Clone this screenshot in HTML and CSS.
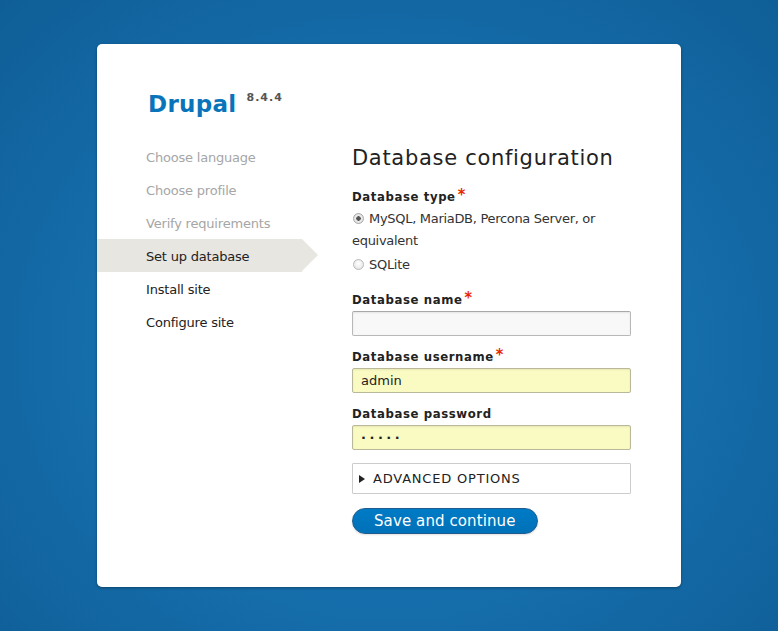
FILE: index.html
```html
<!DOCTYPE html>
<html lang="en">
<head>
<meta charset="utf-8">
<title>Drupal 8.4.4 – Set up database</title>
<link rel="stylesheet" href="styles.css">
</head>
<body>
<div class="page">
  <div class="card">
    <header class="brand">
      <span class="brand-name">Drupal</span><span class="brand-version">8.4.4</span>
    </header>
    <div class="layout">
      <ol class="steps">
        <li class="step done">Choose language</li>
        <li class="step done">Choose profile</li>
        <li class="step done">Verify requirements</li>
        <li class="step active">Set up database</li>
        <li class="step">Install site</li>
        <li class="step">Configure site</li>
      </ol>
      <main class="main">
        <h1 class="title">Database configuration</h1>
        <form class="form">
          <div class="field field-radios">
            <div class="label">Database type<span class="req">*</span></div>
            <label class="radio"><input type="radio" name="db" checked><span>MySQL, MariaDB, Percona Server, or equivalent</span></label>
            <label class="radio radio-2"><input type="radio" name="db"><span>SQLite</span></label>
          </div>
          <div class="field">
            <label class="label" for="dbname">Database name<span class="req">*</span></label>
            <input class="text" id="dbname" type="text">
          </div>
          <div class="field">
            <label class="label" for="dbuser">Database username<span class="req">*</span></label>
            <input class="text filled" id="dbuser" type="text" value="admin">
          </div>
          <div class="field">
            <label class="label" for="dbpass">Database password</label>
            <input class="text filled dots" id="dbpass" type="text" value="·····">
          </div>
          <details class="advanced">
            <summary><span class="tri"></span>ADVANCED OPTIONS</summary>
          </details>
          <button type="button" class="btn">Save and continue</button>
        </form>
      </main>
    </div>
  </div>
</div>
</body>
</html>
```
FILE: styles.css
```css
html, body {
  margin: 0;
  padding: 0;
  height: 100%;
}
body {
  background: radial-gradient(ellipse at 50% 55%, #1b7bbd 0%, #1670ae 45%, #0f5e97 100%);
  font-family: "DejaVu Sans", Verdana, sans-serif;
  font-size: 13px;
  color: #222;
}
.page {
  padding-top: 44px;
}
.card {
  width: 584px;
  box-sizing: border-box;
  margin: 0 auto;
  background: #fff;
  border-radius: 5px;
  box-shadow: 0 1px 3px rgba(0, 0, 0, 0.35);
  padding: 45px 0 53px 0;
  height: 543px;
}
.brand {
  padding-left: 51px;
  height: 30px;
  line-height: 30px;
}
.brand-name {
  font-size: 23px;
  font-weight: bold;
  color: #0a74bb;
  letter-spacing: 0.3px;
}
.brand-version {
  font-size: 11px;
  font-weight: bold;
  color: #555;
  letter-spacing: 1px;
  margin-left: 10px;
  vertical-align: top;
  position: relative;
  top: -6px;
}
.layout {
  display: flex;
  gap: 50px;
  margin-top: 22px;
}
.steps {
  list-style: none;
  margin: 0;
  padding: 0;
  width: 205px;
  flex: none;
}
.step {
  height: 33px;
  line-height: 33px;
  padding-left: 49px;
  color: #222;
  position: relative;
  letter-spacing: -0.2px;
}
.step.done {
  color: #a6a6a6;
}
.step.active {
  background: #e8e6e1;
  margin-top: -1px;
  margin-bottom: 1px;
  line-height: 35px;
}
.step.active::after {
  content: "";
  position: absolute;
  right: -16px;
  top: 0;
  border-left: 16px solid #e8e6e1;
  border-top: 16.5px solid transparent;
  border-bottom: 16.5px solid transparent;
}
.main {
  width: 279px;
  flex: none;
}
.title {
  margin: 0 0 16px 0;
  padding-top: 5px;
  font-size: 21px;
  line-height: 24px;
  font-weight: normal;
  color: #222;
  letter-spacing: 0.7px;
}
.form {
  margin: 0;
}
.field {
  margin-top: 10px;
}
.field-radios {
  margin-top: 0;
  padding-bottom: 3px;
}
.label {
  display: block;
  font-family: "DejaVu Sans Condensed", "DejaVu Sans", sans-serif;
  font-weight: bold;
  line-height: 22px;
  color: #222;
  letter-spacing: 0.6px;
}
.req {
  color: #e62600;
  font-size: 16px;
  margin-left: 2px;
  vertical-align: top;
  position: relative;
  top: -2px;
}
.radio {
  display: block;
  line-height: 22px;
  color: #333;
  letter-spacing: -0.3px;
}
.radio-2 {
  margin-top: 2px;
}
.radio input {
  appearance: none;
  -webkit-appearance: none;
  width: 11px;
  height: 11px;
  margin: 0 5px 0 1px;
  border: 1px solid #b8b8b8;
  border-radius: 50%;
  background: radial-gradient(circle at 50% 40%, #ffffff 0%, #e0e0e0 100%);
  vertical-align: -1px;
  box-sizing: border-box;
}
.radio input:checked {
  background: radial-gradient(circle, #555 0, #555 2px, #ececec 2.5px, #d8d8d8 100%);
  border-color: #a8a8a8;
}
.text {
  display: block;
  box-sizing: border-box;
  width: 279px;
  height: 25px;
  margin: 0;
  padding: 0 8px;
  border: 1px solid #b8b8b8;
  border-top-color: #a8a8a8;
  border-radius: 2px;
  background: #f8f8f8;
  font-family: "DejaVu Sans", Verdana, sans-serif;
  font-size: 13px;
  color: #222;
  box-shadow: inset 0 1px 2px rgba(0, 0, 0, 0.08);
}
.text.filled {
  background: #fafac3;
  border-color: #b9b99a;
}
.text.dots {
  letter-spacing: 3.5px;
  font-weight: bold;
}
.advanced {
  margin-top: 13px;
  border: 1px solid #cccccc;
  border-radius: 1px;
  background: #fff;
}
.advanced summary {
  list-style: none;
  height: 29px;
  line-height: 29px;
  padding-left: 6px;
  font-size: 13px;
  color: #222;
  letter-spacing: 0.8px;
  cursor: pointer;
}
.advanced summary::-webkit-details-marker {
  display: none;
}
.tri {
  display: inline-block;
  width: 0;
  height: 0;
  border-left: 6px solid #222;
  border-top: 4px solid transparent;
  border-bottom: 4px solid transparent;
  margin-right: 8px;
  vertical-align: 0px;
}
.btn {
  display: block;
  margin-top: 14px;
  height: 26px;
  padding: 0 21px;
  white-space: nowrap;
  border: 1px solid #1e5c90;
  border-radius: 13px;
  background: linear-gradient(to bottom, #007bc6 0%, #0071b8 100%);
  color: #fff;
  font-family: "DejaVu Sans", Verdana, sans-serif;
  font-size: 15px;
  line-height: 24px;
  letter-spacing: 0.1px;
  cursor: pointer;
  box-shadow: 0 1px 2px rgba(0, 0, 0, 0.12);
}
```
